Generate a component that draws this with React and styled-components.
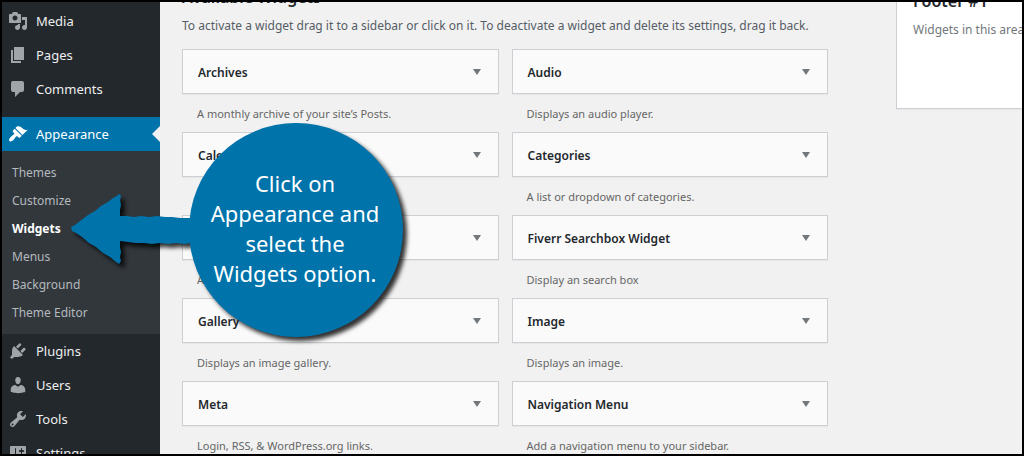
import React from "react";
import styled, { createGlobalStyle } from "styled-components";

const GlobalStyle = createGlobalStyle`
    * {
        box-sizing: border-box;
    }
    body {
        margin: 0;
        background: #f1f1f1;
        font-family: "Noto Sans", "Open Sans", sans-serif;
        font-size: 12px;
        color: #444;
    }
    h2,
    p,
    ul {
        margin: 0;
        padding: 0;
    }
    ul {
        list-style: none;
    }
    a {
        text-decoration: none;
    }
`;

const Frame = styled.div`
    position: relative;
    display: flex;
    height: 100vh;
    border: 2px solid #000;
    overflow: hidden;
`;

const Sidebar = styled.nav`
    flex: none;
    width: 158px;
    padding-top: 2px;
    background: #23282d;
`;

const MenuLink = styled.a`
    position: relative;
    display: flex;
    align-items: center;
    gap: 8px;
    height: 34px;
    margin-top: ${props => (props.$current ? "11px" : "0")};
    padding-left: 6px;
    font-size: 13px;
    color: ${props => (props.$current ? "#fff" : "#eee")};
    background: ${props => (props.$current ? "#0073aa" : "transparent")};
    svg {
        width: 20px;
        height: 20px;
        fill: ${props => (props.$current ? "#fff" : "#a0a5aa")};
    }
    &::after {
        content: "";
        display: ${props => (props.$current ? "block" : "none")};
        position: absolute;
        right: 0;
        border: 8px solid transparent;
        border-right-color: #f1f1f1;
    }
`;

const SubMenu = styled.ul`
    padding: 8px 0 7px;
    background: #32373c;
`;

const SubLink = styled.a`
    display: block;
    padding-left: 10px;
    line-height: 28px;
    color: ${props => (props.$current ? "#fff" : "#b4b9be")};
    font-weight: ${props => (props.$current ? 700 : 400)};
`;

const Content = styled.main`
    flex: 1;
    min-width: 0;
    display: grid;
    grid-template-columns: minmax(0, 1fr) 126px;
    gap: 68px;
    align-items: start;
    padding-left: 22px;
`;

const Available = styled.section`
    margin-top: -17px;
`;

const Heading = styled.h2`
    font-size: 16px;
    line-height: 24px;
    font-weight: 600;
    color: #23282d;
    white-space: nowrap;
`;

const Intro = styled.p`
    padding: 7px 0 13px;
    line-height: 20px;
    white-space: nowrap;
    color: #555d66;
`;

const WidgetGrid = styled.div`
    display: grid;
    grid-template-columns: 1fr 1fr;
    column-gap: 13px;
`;

const WidgetTop = styled.button`
    display: flex;
    align-items: center;
    justify-content: space-between;
    width: 100%;
    height: 45px;
    padding: 1px 17px 0 15px;
    border: 1px solid #ccd0d4;
    background: #fafafa;
    box-shadow: 0 1px 1px rgba(0, 0, 0, 0.04);
    font-family: inherit;
    font-size: 12px;
    font-weight: 600;
    color: #23282d;
    svg {
        width: 8px;
        height: 6px;
        fill: #72777c;
    }
`;

const WidgetDescription = styled.p`
    height: 38px;
    padding: 10px 15px;
    font-size: 11px;
    line-height: 20px;
    color: #666;
`;

const FooterArea = styled.aside`
    height: 109px;
    margin-top: -2px;
    border: 1px solid #ccd0d4;
    border-width: 0 0 1px 1px;
    background: #fff;
    box-shadow: 0 1px 1px rgba(0, 0, 0, 0.04);
    padding-left: 16px;
    overflow: hidden;
    white-space: nowrap;
    h2 {
        margin-top: -11px;
    }
    p {
        padding-top: 7px;
        line-height: 20px;
        color: #72777c;
    }
`;

const Callout = styled.div`
    position: absolute;
    left: 64px;
    top: 116px;
    width: 350px;
    height: 232px;
    pointer-events: none;
    svg {
        display: block;
        overflow: visible;
        filter: drop-shadow(4px 4px 2px rgba(0, 0, 0, 0.8));
    }
`;

const CalloutText = styled.p`
    position: absolute;
    left: 123px;
    top: 50px;
    width: 212px;
    text-align: center;
    font-size: 22px;
    line-height: 30px;
    color: #fff;
`;

const icons = {
    media:
        "M13 11V4c0-.55-.45-1-1-1h-1.67L9 1H5L3.67 3H2c-.55 0-1 .45-1 1v7c0 .55.45 1 1 1h10c.55 0 1-.45 1-1zM7 4.5c1.38 0 2.5 1.12 2.5 2.5S8.38 9.5 7 9.5 4.5 8.38 4.5 7 5.62 4.5 7 4.5zM14 6h5v10.5c0 1.38-1.12 2.5-2.5 2.5S14 17.88 14 16.5s1.12-2.5 2.5-2.5c.17 0 .34.02.5.05V9h-3V6zm-4 8.05V13h2v3.5c0 1.38-1.12 2.5-2.5 2.5S7 17.88 7 16.5 8.12 14 9.5 14c.17 0 .34.02.5.05z",
    pages: "M6 15V2h10v13H6zm-1 1h8v2H3V5h2v11z",
    comments:
        "M5 2h9c1.1 0 2 .9 2 2v7c0 1.1-.9 2-2 2h-2l-5 5v-5H5c-1.1 0-2-.9-2-2V4c0-1.1.9-2 2-2z",
    appearance:
        "M14.48 11.06L7.41 3.99l1.5-1.5c.5-.56 2.3-.47 3.51.32 1.21.8 1.43 1.28 2.91 2.1 1.18.64 2.45 1.26 4.45.85zm-.71.71L6.7 4.7 4.93 6.47c-.39.39-.39 1.02 0 1.41l1.06 1.06c.39.39.39 1.03 0 1.42-.6.6-1.43 1.11-2.21 1.69-.35.26-.7.53-1.01.84C1.43 14.23.4 16.08 1.4 17.07c.99 1 2.84-.03 4.18-1.36.31-.31.58-.66.85-1.02.57-.78 1.08-1.61 1.69-2.21.39-.39 1.02-.39 1.41 0l1.06 1.06c.39.39 1.02.39 1.41 0z",
    plugins:
        "M13.11 4.36L9.87 7.6 8 5.73l3.24-3.24c.35-.34 1.05-.2 1.56.32.52.51.66 1.21.31 1.55zm-8 1.77l.91-1.12 9.01 9.01-1.19.84c-.71.71-2.63 1.16-3.82 1.16H6.14L4.9 17.26c-.59.59-1.54.59-2.12 0-.59-.58-.59-1.53 0-2.12l1.24-1.24v-3.88c0-1.13.4-3.19 1.09-3.89zm7.26 3.97l3.24-3.24c.34-.35 1.04-.21 1.55.31.52.51.66 1.21.31 1.55l-3.24 3.25z",
    users:
        "M10 9.25c-2.27 0-2.73-3.44-2.73-3.44C7 4.02 7.82 2 9.97 2c2.16 0 2.98 2.02 2.71 3.81 0 0-.41 3.44-2.68 3.44zm0 2.57L12.72 10c2.39 0 4.52 2.33 4.52 4.53v2.49s-3.65 1.13-7.24 1.13c-3.65 0-7.24-1.13-7.24-1.13v-2.49c0-2.25 1.94-4.48 4.47-4.48z",
    tools:
        "M16.68 9.77c-1.34 1.34-3.3 1.67-4.95.99l-5.41 6.52c-.99.99-2.59.99-3.58 0s-.99-2.59 0-3.57l6.52-5.42c-.68-1.65-.35-3.61.99-4.95 1.28-1.28 3.12-1.62 4.72-1.06l-2.89 2.89 2.82 2.82 2.86-2.87c.53 1.58.18 3.39-1.08 4.65zM3.81 16.21c.4.39 1.04.39 1.43 0 .4-.4.4-1.04 0-1.43-.39-.4-1.03-.4-1.43 0-.39.39-.39 1.03 0 1.43z",
    settings:
        "M18 16V4c0-.55-.45-1-1-1H3c-.55 0-1 .45-1 1v12c0 .55.45 1 1 1h14c.55 0 1-.45 1-1zM8 11h1c.55 0 1 .45 1 1s-.45 1-1 1H8v1.5c0 .28-.22.5-.5.5s-.5-.22-.5-.5V13H6c-.55 0-1-.45-1-1s.45-1 1-1h1V5.5c0-.28.22-.5.5-.5s.5.22.5.5V11zm5-2h-1c-.55 0-1-.45-1-1s.45-1 1-1h1V5.5c0-.28.22-.5.5-.5s.5.22.5.5V7h1c.55 0 1 .45 1 1s-.45 1-1 1h-1v5.5c0 .28-.22.5-.5.5s-.5-.22-.5-.5V9z",
};

const menu = [
    { icon: "media", title: "Media" },
    { icon: "pages", title: "Pages" },
    { icon: "comments", title: "Comments" },
    {
        icon: "appearance",
        title: "Appearance",
        items: [
            "Themes",
            "Customize",
            "Widgets",
            "Menus",
            "Background",
            "Theme Editor",
        ],
    },
    { icon: "plugins", title: "Plugins" },
    { icon: "users", title: "Users" },
    { icon: "tools", title: "Tools" },
    { icon: "settings", title: "Settings" },
];

const widgets = [
    ["Archives", "A monthly archive of your site’s Posts."],
    ["Audio", "Displays an audio player."],
    ["Calendar", "A calendar of your site’s Posts."],
    ["Categories", "A list or dropdown of categories."],
    ["Custom HTML", "Arbitrary HTML code."],
    ["Fiverr Searchbox Widget", "Display an search box"],
    ["Gallery", "Displays an image gallery."],
    ["Image", "Displays an image."],
    ["Meta", "Login, RSS, & WordPress.org links."],
    ["Navigation Menu", "Add a navigation menu to your sidebar."],
];

function MenuItem({ item }) {
    return (
        <li>
            <MenuLink href="#" $current={!!item.items}>
                <svg viewBox="0 0 20 20" aria-hidden="true">
                    <path d={icons[item.icon]} />
                </svg>
                {item.title}
            </MenuLink>
            {item.items ? (
                <SubMenu>
                    {item.items.map(name => (
                        <li key={name}>
                            <SubLink href="#" $current={name === "Widgets"}>
                                {name}
                            </SubLink>
                        </li>
                    ))}
                </SubMenu>
            ) : null}
        </li>
    );
}

function Widget({ title, description }) {
    return (
        <div>
            <WidgetTop type="button">
                {title}
                <svg viewBox="0 0 8 6" aria-hidden="true">
                    <path d="M0 0h8L4 6z" />
                </svg>
            </WidgetTop>
            <WidgetDescription>{description}</WidgetDescription>
        </div>
    );
}

export default function App() {
    return (
        <Frame>
            <GlobalStyle />
            <Sidebar>
                <ul>
                    {menu.map(item => (
                        <MenuItem key={item.title} item={item} />
                    ))}
                </ul>
            </Sidebar>
            <Content>
                <Available>
                    <Heading>Available Widgets</Heading>
                    <Intro>
                        To activate a widget drag it to a sidebar or click on
                        it. To deactivate a widget and delete its settings, drag
                        it back.
                    </Intro>
                    <WidgetGrid>
                        {widgets.map(([title, description]) => (
                            <Widget
                                key={title}
                                title={title}
                                description={description}
                            />
                        ))}
                    </WidgetGrid>
                </Available>
                <FooterArea>
                    <Heading>Footer #1</Heading>
                    <p>Widgets in this area</p>
                </FooterArea>
            </Content>
            <Callout>
                <svg width="350" height="232" viewBox="66 118 350 232">
                    <path
                        fill="#0073aa"
                        d="M71 227L75 225L80 221L88 215L95 211L101 206L108 202L113 198L117 196L119 194L121 196L120 200L121 205L120 210L120 216L127 216L134 217L141 216L149 217L157 216L165 217L172 217L180 218L192 218V243L184 244L176 243L168 244L160 243L152 244L144 243L136 243L128 242L120 241L120 247L121 252L120 257L121 261L119 264L116 262L110 257L103 253L96 247L89 243L82 237L76 233L72 231Z"
                    />
                    <circle cx="296" cy="230" r="107" fill="#0073aa" />
                </svg>
                <CalloutText>
                    Click on
                    <br />
                    Appearance and
                    <br />
                    select the
                    <br />
                    Widgets option.
                </CalloutText>
            </Callout>
        </Frame>
    );
}
